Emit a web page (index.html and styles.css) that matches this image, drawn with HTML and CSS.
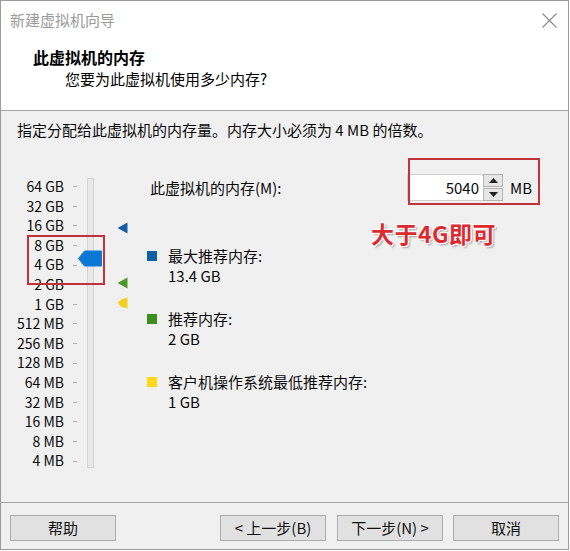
FILE: index.html
```html
<!DOCTYPE html>
<html lang="zh-CN">
<head>
<meta charset="utf-8">
<title>新建虚拟机向导</title>
<link rel="stylesheet" href="styles.css">
</head>
<body>
<div class="window">
  <header class="header">
    <div class="titlebar">
      <span class="title">新建虚拟机向导</span>
      <svg class="close" width="15" height="15" viewBox="0 0 15 15"><path d="M0.5 0.5 L14.5 14.5 M14.5 0.5 L0.5 14.5" stroke="#8a8a8a" stroke-width="1.1" fill="none"/></svg>
    </div>
    <div class="heading">此虚拟机的内存</div>
    <div class="subheading">您要为此虚拟机使用多少内存?</div>
  </header>
  <main class="content">
    <p class="intro">指定分配给此虚拟机的内存量。内存大小必须为 4 MB 的倍数。</p>
    <div class="main">
      <div class="slider">
        <ul class="scale">
          <li><span>64 GB</span><i></i></li>
          <li><span>32 GB</span><i></i></li>
          <li><span>16 GB</span><i></i></li>
          <li><span>8 GB</span><i></i></li>
          <li><span>4 GB</span><i></i></li>
          <li><span>2 GB</span><i></i></li>
          <li><span>1 GB</span><i></i></li>
          <li><span>512 MB</span><i></i></li>
          <li><span>256 MB</span><i></i></li>
          <li><span>128 MB</span><i></i></li>
          <li><span>64 MB</span><i></i></li>
          <li><span>32 MB</span><i></i></li>
          <li><span>16 MB</span><i></i></li>
          <li><span>8 MB</span><i></i></li>
          <li><span>4 MB</span><i></i></li>
        </ul>
        <div class="track"></div>
        <svg class="thumb" width="24" height="17" viewBox="0 0 24 17"><path d="M0.5 8.5 L6.5 1 L23.5 1 L23.5 16 L6.5 16 Z" fill="#0a78d4" stroke="#0a78d4" stroke-width="1" stroke-linejoin="round"/></svg>
        <svg class="marker marker-max" width="11" height="12" viewBox="0 0 11 12"><path d="M0.5 6 L10.5 0.5 L10.5 11.5 Z" fill="#175ea3"/></svg>
        <svg class="marker marker-rec" width="11" height="12" viewBox="0 0 11 12"><path d="M0.5 6 L10.5 0.5 L10.5 11.5 Z" fill="#4f9628"/></svg>
        <svg class="marker marker-min" width="11" height="12" viewBox="0 0 11 12"><path d="M1 6 Q2 2 10.5 0.5 L10.5 11.5 Q2 10 1 6 Z" fill="#f4d023"/></svg>
      </div>
      <div class="pane">
        <div class="mem-row">
          <span class="mem-label">此虚拟机的内存(M):</span>
          <div class="spin">
            <div class="spin-input">5040</div>
            <div class="spin-btns">
              <span class="spin-btn"><svg width="9" height="5" viewBox="0 0 9 5"><path d="M0 5 L4.5 0 L9 5 Z" fill="#222"/></svg></span>
              <span class="spin-btn"><svg width="9" height="5" viewBox="0 0 9 5"><path d="M0 0 L4.5 5 L9 0 Z" fill="#222"/></svg></span>
            </div>
          </div>
          <span class="unit">MB</span>
        </div>
        <div class="legend">
          <div class="item">
            <span class="swatch sw-max"></span>
            <div class="item-text"><div>最大推荐内存:</div><div>13.4 GB</div></div>
          </div>
          <div class="item">
            <span class="swatch sw-rec"></span>
            <div class="item-text"><div>推荐内存:</div><div>2 GB</div></div>
          </div>
          <div class="item">
            <span class="swatch sw-min"></span>
            <div class="item-text"><div>客户机操作系统最低推荐内存:</div><div>1 GB</div></div>
          </div>
        </div>
      </div>
    </div>
  </main>
  <footer class="footer">
    <button class="btn">帮助</button>
    <div class="nav">
      <button class="btn">&lt; 上一步(B)</button>
      <button class="btn">下一步(N) &gt;</button>
      <button class="btn btn-cancel">取消</button>
    </div>
  </footer>
  <div class="hl hl-scale"></div>
  <div class="hl hl-input"></div>
  <div class="note">大于4G即可</div>
</div>
</body>
</html>
```

FILE: styles.css
```css
* { box-sizing: border-box; }
html, body { margin: 0; padding: 0; background: #fff; }
body {
  font-family: "Noto Sans CJK SC", "Noto Sans", sans-serif;
  font-size: 15px;
  color: #0a0a0a;
}
.window {
  position: relative;
  width: 569px;
  height: 550px;
  border: 1px solid #9c9c9c;
  background: #f0f0f0;
  display: flex;
  flex-direction: column;
}
.header {
  background: #fff;
  height: 110px;
  border-bottom: 1px solid #a6a6a6;
  flex: none;
}
.titlebar {
  height: 38px;
  display: flex;
  align-items: center;
  justify-content: space-between;
  padding: 0 11px 0 9px;
}
.title { color: #9a9a9a; line-height: 38px; }
.close { display: block; }
.heading {
  margin-top: 8px;
  padding-left: 32px;
  line-height: 20px;
  font-size: 16px;
  font-weight: bold;
  color: #000;
}
.subheading {
  margin-top: 2px;
  padding-left: 64px;
  line-height: 20px;
  color: #000;
}
.content { flex: 1; }
.intro {
  margin: 9px 0 0 16px;
  line-height: 20px;
}
.main {
  margin-top: 32px;
  display: flex;
}
.slider {
  position: relative;
  width: 146px;
  display: flex;
  flex: none;
}
.scale {
  list-style: none;
  margin: 0;
  padding: 5px 0 0 0;
}
.scale li {
  display: flex;
  align-items: center;
  height: 19.6px;
  line-height: 19.6px;
  font-size: 14px;
}
.scale li span { width: 63px; text-align: right; }
.scale li i {
  display: block;
  width: 4px;
  height: 1px;
  margin-left: 9px;
  background: #b0b0b0;
}
.track {
  margin: 6px 0 0 10px;
  width: 7px;
  height: 290px;
  border: 1px solid #d4d4d4;
  background: #e8e8e8;
}
.thumb { position: absolute; left: 77px; top: 78px; }
.marker { position: absolute; left: 116px; }
.marker-max { top: 50px; }
.marker-rec { top: 105px; }
.marker-min { top: 125px; }
.pane { flex: 1; display: flex; flex-direction: column; }
.mem-row {
  margin-top: 2px;
  height: 27px;
  display: flex;
  align-items: center;
}
.mem-label { width: 260px; padding-left: 3px; }
.spin { display: flex; height: 27px; }
.spin-input {
  width: 76px;
  height: 27px;
  background: #fff;
  border: 1px solid #cfcfcf;
  border-right: none;
  text-align: right;
  padding-right: 4px;
  line-height: 25px;
}
.spin-btns {
  width: 20px;
  display: flex;
  flex-direction: column;
  gap: 1px;
}
.spin-btn {
  flex: 1;
  display: flex;
  align-items: center;
  justify-content: center;
  background: #e6e6e6;
  border: 1px solid #b3b3b3;
}
.spin-btn svg { display: block; }
.unit { margin-left: 7px; }
.legend {
  margin-top: 45px;
  display: flex;
  flex-direction: column;
  gap: 23px;
}
.item { display: flex; align-items: flex-start; }
.swatch {
  width: 10px;
  height: 10px;
  margin-top: 5px;
  margin-right: 11px;
  flex: none;
}
.sw-max { background: #0e5fa8; }
.sw-rec { background: #3f8f1d; }
.sw-min { background: #fdd816; }
.item-text div { line-height: 20px; }
.footer {
  flex: none;
  height: 47px;
  border-top: 1px solid #a6a6a6;
  display: flex;
  justify-content: space-between;
  padding: 12px 9px 0 9px;
}
.nav { display: flex; gap: 11px; }
.btn {
  width: 106px;
  height: 26px;
  font: inherit;
  color: #111;
  background: #e1e1e1;
  border: 1px solid #adadad;
  padding: 0;
  line-height: 24px;
}
.btn-cancel { margin-left: -1px; }
.hl {
  position: absolute;
  border: 2px solid #c0323c;
}
.hl-scale { left: 26px; top: 234px; width: 78px; height: 50px; }
.hl-input { left: 407px; top: 157px; width: 132px; height: 47px; }
.note {
  position: absolute;
  left: 370px;
  top: 218px;
  line-height: 28px;
  font-size: 23px;
  font-weight: bold;
  letter-spacing: 0.5px;
  color: #dc2a30;
  text-shadow:
    1px 0 0 #fff, -1px 0 0 #fff, 0 1px 0 #fff, 0 -1px 0 #fff,
    1px 1px 0 #fff, -1px -1px 0 #fff, 1px -1px 0 #fff, -1px 1px 0 #fff,
    2px 2px 2px rgba(0,0,0,0.35);
}
```
